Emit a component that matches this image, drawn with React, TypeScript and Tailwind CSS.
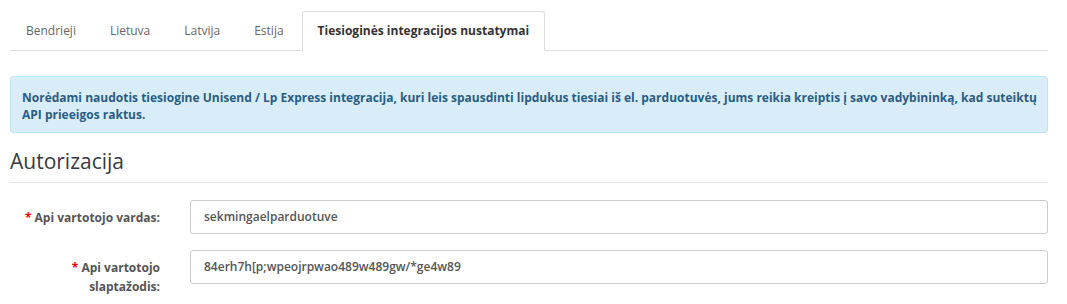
import React from 'react';

const tabs = ['Bendrieji', 'Lietuva', 'Latvija', 'Estija', 'Tiesioginės integracijos nustatymai'];

const Field: React.FC<{ label: string; value: string }> = ({ label, value }) => (
    <div className="flex items-start">
        <label className="w-[150px] shrink-0 pl-[10px] pt-[8px] text-right text-[12px] font-bold leading-[19px] text-[#555]">
            <span className="text-[#e00]">*</span> {label}
        </label>
        <div className="ml-[30px] flex h-[34px] flex-1 items-center rounded-[3px] border border-[#ccc] bg-white px-[13px] text-[12px] font-semibold text-[#555]">
            {value}
        </div>
    </div>
);

export default function App() {
    const active = 4;

    return (
        <div className="min-h-[304px] bg-white pl-[10px] pr-[19px] pt-[11px] font-['Open_Sans',sans-serif]">
            {/* tabs */}
            <ul className="flex border-b border-[#ddd]">
                {tabs.map((t, i) => (
                    <li
                        key={t}
                        className={
                            i === active
                                ? 'mr-[2px] -mb-px rounded-t-[3px] border border-[#ddd] border-b-white bg-white px-[15px] pt-[10px] pb-[9px] text-[12px] font-bold leading-[18px] text-[#333]'
                                : 'mr-[2px] border border-transparent px-[15px] pt-[10px] pb-[9px] text-[12px] leading-[18px] text-[#666]'
                        }
                    >
                        {t}
                    </li>
                ))}
            </ul>

            {/* info box */}
            <div className="mt-[25px] rounded-[3px] border border-[#bfe6f3] bg-[#d9edf8] pl-[11px] pr-[10px] pt-[12px] pb-[9px] text-[12px] font-bold leading-[17px] text-[#2a5d83]">
                Norėdami naudotis tiesiogine Unisend / Lp Express integracija, kuri leis spausdinti lipdukus tiesiai iš el. parduotuvės, jums reikia kreiptis į savo vadybininką, kad suteiktų API prieeigos raktus.
            </div>

            {/* section */}
            <h3 className="mt-[13px] border-b border-[#e5e5e5] pb-[6px] text-[21px] font-normal leading-[30px] text-[#363a41]">
                Autorizacija
            </h3>

            <div className="mt-[17px] flex flex-col gap-[16px]">
                <Field label="Api vartotojo vardas:" value="sekmingaelparduotuve" />
                <Field label="Api vartotojo slaptažodis:" value="84erh7h[p;wpeojrpwao489w489gw/*ge4w89" />
            </div>
        </div>
    );
}
